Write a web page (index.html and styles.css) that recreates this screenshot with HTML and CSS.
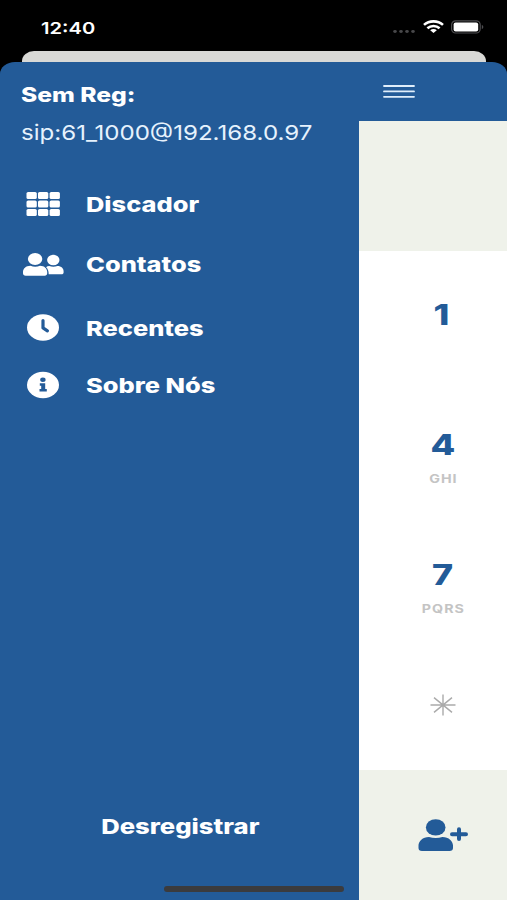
FILE: index.html
```html
<!DOCTYPE html>
<html lang="pt-BR">
<head>
  <meta charset="UTF-8">
  <meta name="viewport" content="width=device-width, initial-scale=1.0">
  <title>Discador</title>
  <link rel="stylesheet" href="styles.css">
</head>
<body>
  <div class="status-bar">
    <span class="wide time">12:40</span>
    <div class="status-icons">
      <svg width="24" height="5" viewBox="0 0 24 5" fill="#48484a">
        <ellipse cx="3" cy="2.5" rx="1.8" ry="1.4"/>
        <ellipse cx="9" cy="2.5" rx="1.8" ry="1.4"/>
        <ellipse cx="15" cy="2.5" rx="1.8" ry="1.4"/>
        <ellipse cx="21" cy="2.5" rx="1.8" ry="1.4"/>
      </svg>
      <svg class="wifi" width="21" height="13" viewBox="0 0 21 13" fill="none" stroke="#fff" stroke-width="2.6">
        <path d="M1 4.9C6.2.2 14.8.2 20 4.9"/>
        <path d="M4.4 8.3c3.4-3 8.8-3 12.2 0"/>
        <path d="M10.5 13 7.2 10.2c1.8-1.5 4.8-1.5 6.6 0z" fill="#fff" stroke="none"/>
      </svg>
      <svg class="battery" width="33" height="14" viewBox="0 0 33 14">
        <rect x=".6" y=".8" width="28.6" height="12.2" rx="4" fill="none" stroke="#4d4d50" stroke-width="1.2"/>
        <rect x="2.6" y="2.4" width="24.6" height="9" rx="2" fill="#fff"/>
        <path d="M30.8 5v4c2-.6 2-3.4 0-4z" fill="#4d4d50"/>
      </svg>
    </div>
  </div>

  <div class="back-sheet"></div>

  <div class="app">
    <nav class="drawer">
      <div class="account">
        <span class="wide account-state">Sem Reg:</span>
        <span class="wide account-sip">sip:61_1000@192.168.0.97</span>
      </div>
      <ul class="menu">
        <li>
          <svg width="44" height="34" viewBox="0 0 44 34" fill="#fff">
            <rect x="5.5" y="5" width="10.3" height="7" rx="1.6"/>
            <rect x="17" y="5" width="10.3" height="7" rx="1.6"/>
            <rect x="28.6" y="5" width="10.3" height="7" rx="1.6"/>
            <rect x="5.5" y="13.5" width="10.3" height="7" rx="1.6"/>
            <rect x="17" y="13.5" width="10.3" height="7" rx="1.6"/>
            <rect x="28.6" y="13.5" width="10.3" height="7" rx="1.6"/>
            <rect x="5.5" y="22" width="10.3" height="7" rx="1.6"/>
            <rect x="17" y="22" width="10.3" height="7" rx="1.6"/>
            <rect x="28.6" y="22" width="10.3" height="7" rx="1.6"/>
          </svg>
          <span class="wide">Discador</span>
        </li>
        <li>
          <svg width="44" height="34" viewBox="0 0 44 34" fill="#fff">
            <ellipse cx="14.1" cy="12" rx="7.2" ry="6.1"/>
            <path d="M9.5 18.8c3 1.2 6.4 1.2 9.4 0 4.6 0 7.3 3 7.3 6.2v1.3c0 1.5-1 2.4-2.5 2.4h-19C3 28.7 2 27.8 2 26.3V25c0-3.2 2.8-6.2 7.5-6.2z"/>
            <ellipse cx="32.3" cy="13" rx="6.2" ry="5.2"/>
            <path d="M28.2 19.1c2.8 1 5.4 1 8.2 0 4 0 6.2 2.5 6.2 5.3v1c0 1.2-.8 1.8-2 1.8H27.7c0-3.3-.8-5.3-2.6-7 .8-.7 1.9-1.1 3.1-1.1z"/>
          </svg>
          <span class="wide">Contatos</span>
        </li>
        <li>
          <svg width="44" height="34" viewBox="0 0 44 34">
            <ellipse cx="22" cy="16.5" rx="16" ry="13.2" fill="#fff"/>
            <path d="M22 9.5v7.4l4.4 2.9" fill="none" stroke="#235b98" stroke-width="3.2" stroke-linecap="round" stroke-linejoin="round"/>
          </svg>
          <span class="wide">Recentes</span>
        </li>
        <li>
          <svg width="44" height="34" viewBox="0 0 44 34">
            <ellipse cx="22" cy="17" rx="16" ry="13.2" fill="#fff"/>
            <g fill="#235b98">
              <ellipse cx="21.9" cy="11.7" rx="2.7" ry="2.2"/>
              <path d="M18.8 15.2h5.4v5.8h1.6v2.5h-7.3V21h1.7v-3.3h-1.4z"/>
            </g>
          </svg>
          <span class="wide">Sobre Nós</span>
        </li>
      </ul>
      <span class="wide logout">Desregistrar</span>
    </nav>

    <main class="dialer">
      <header class="toolbar">
        <svg width="32" height="15" viewBox="0 0 32 15" stroke="#dfeefb" stroke-width="1.8" stroke-linecap="round">
          <path d="M1 2h30M1 7.4h30M1 12.8h30"/>
        </svg>
      </header>
      <div class="display"></div>
      <div class="keypad">
        <div class="key">
          <span class="wide digit one">1</span>
        </div>
        <div class="key">
          <span class="wide digit">4</span>
          <span class="wide letters">GHI</span>
        </div>
        <div class="key">
          <span class="wide digit">7</span>
          <span class="wide letters">PQRS</span>
        </div>
        <div class="key star">
          <svg width="26" height="22" viewBox="0 0 26 22" stroke="#aaa" stroke-width="1.4">
            <path d="M13 .5v21M.5 11h25M4 3.6l18 14.8M22 3.6 4 18.4"/>
          </svg>
        </div>
      </div>
      <footer class="actions">
        <svg width="50" height="34" viewBox="0 0 50 34" fill="#235b98">
          <ellipse cx="17.7" cy="9.4" rx="9.8" ry="8.2"/>
          <path d="M11 19c4.2 1.4 9.2 1.4 13.4 0 6.5 0 10.6 4.2 10.6 8.6v2.4c0 1.9-1.2 3-3.5 3H4C1.7 33 .5 31.9.5 30v-2.4C.5 23.2 4.6 19 11 19z"/>
          <path d="M41 11.3v9.8M34 16.2h14" stroke="#235b98" stroke-width="4" stroke-linecap="round"/>
        </svg>
      </footer>
    </main>
  </div>

  <div class="home-indicator"></div>
</body>
</html>
```
FILE: styles.css
```css
* {
  box-sizing: border-box;
}
body {
  position: relative;
  display: flex;
  flex-direction: column;
  height: 900px;
  margin: 0;
  overflow: hidden;
  background: #000;
  color: #fff;
  font-family: Inter, "Liberation Sans", sans-serif;
}
svg {
  display: block;
  flex: none;
}

/* wide lettering */
.wide {
  display: inline-block;
  white-space: nowrap;
  transform: scaleX(1.24);
  transform-origin: left center;
}

.status-bar {
  display: flex;
  justify-content: space-between;
  height: 51px;
  padding: 17px 23px 0 41px;
}
.time {
  font-size: 16.5px;
  font-weight: 600;
  line-height: 22px;
  transform: scaleX(1.22);
}
.status-icons {
  display: flex;
  align-items: flex-start;
  height: 21px;
}
.status-icons svg:first-child {
  margin-top: 12px;
}
.wifi {
  margin: 3px 0 0 7px;
}
.battery {
  margin: 3px 0 0 7px;
}

.back-sheet {
  height: 11px;
  margin: 0 21px 0 22px;
  background: #d9d9d6;
  border-radius: 12px 12px 0 0 / 10px 10px 0 0;
}

.app {
  display: flex;
  flex: 1;
  overflow: hidden;
  background: #235b98;
  border-radius: 15px 15px 0 0 / 12px 12px 0 0;
}

.drawer {
  display: flex;
  flex-direction: column;
  width: 359px;
  padding: 19px 21px 0;
}
.account {
  display: flex;
  flex-direction: column;
  align-items: flex-start;
  gap: 9px;
}
.account-state {
  font-size: 20px;
  font-weight: 800;
  line-height: 28px;
  transform: scaleX(1.23);
}
.account-sip {
  color: #e6f2fd;
  font-size: 20.5px;
  line-height: 30px;
  transform: scaleX(1.176);
}
.menu {
  display: flex;
  flex-direction: column;
  margin: 39px 0 0;
  padding: 0;
  list-style: none;
}
.menu li {
  display: flex;
  align-items: center;
  gap: 21px;
  height: 34px;
  font-size: 20.5px;
  font-weight: 800;
}
.menu li + li {
  margin-top: 26px;
}
.menu li:nth-child(3) {
  margin-top: 30px;
}
.menu li:nth-child(4) {
  margin-top: 23px;
}
.logout {
  align-self: center;
  margin-top: auto;
  margin-right: -2px;
  margin-bottom: 59px;
  font-size: 20.5px;
  font-weight: 800;
  line-height: 28px;
  transform: scaleX(1.25);
  transform-origin: center;
}

.dialer {
  display: flex;
  flex: 1;
  flex-direction: column;
}
.toolbar {
  flex: none;
  height: 59px;
  padding: 22px 0 0 24px;
}
.display {
  flex: none;
  height: 130px;
  background: #eff2ea;
}
.keypad {
  flex: 1;
  min-height: 0;
  background: #fff;
}
.key {
  display: flex;
  flex-direction: column;
  align-items: center;
  height: 130px;
  padding: 46px 0 0 20px;
}
.key .wide {
  transform-origin: center;
}
.digit {
  color: #235b98;
  font-size: 29px;
  font-weight: 800;
  line-height: 36px;
}
.one {
  margin-right: 3px;
}
.letters {
  margin-top: 8px;
  color: #c4c4c4;
  font-size: 11.5px;
  font-weight: 700;
  letter-spacing: 0.8px;
  line-height: 16px;
}
.star {
  padding-top: 53px;
}
.actions {
  display: flex;
  flex: none;
  justify-content: center;
  height: 130px;
  padding: 48px 0 0 20px;
  background: #eff2ea;
}

.home-indicator {
  position: absolute;
  left: 164px;
  bottom: 8px;
  width: 180px;
  height: 6px;
  background: #3b3b3d;
  border-radius: 3px;
}
```
